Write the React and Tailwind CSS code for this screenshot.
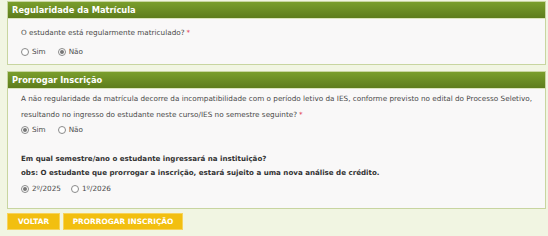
import React from "react";

const Radio = ({ checked, label }) => (
  <label className="flex items-center gap-[3px]">
    <span className="w-[8px] h-[8px] rounded-full border border-[#8a8a8a] bg-white flex items-center justify-center">
      {checked && <span className="w-[4px] h-[4px] rounded-full bg-[#777]" />}
    </span>
    <span>{label}</span>
  </label>
);

const Panel = ({ title, children }) => (
  <div className="border border-[#c8d5a0] bg-[#f9f8f8]">
    <div className="h-[17px] flex items-center pl-[4px] text-white font-bold text-[8.3px] bg-gradient-to-b from-[#7a9e2c] to-[#5e7d1c] border-b border-[#dbe5bd]">
      {title}
    </div>
    {children}
  </div>
);

export default function App() {
  return (
    <div
      className="w-[548px] h-[236px] bg-[#f1f5e2] pl-[7px] pr-[2px] pt-[1px] text-[#4a4a4a] text-[7.25px] whitespace-nowrap overflow-hidden"
      style={{ fontFamily: '"DejaVu Sans", Verdana, sans-serif' }}
    >
      <Panel title="Regularidade da Matrícula">
        <div className="pl-[13px] pt-[6px] pb-[3px]">
          <p className="h-[16px] flex items-center">
            O estudante está regularmente matriculado?<span className="text-[#e0203a] ml-[2px]">*</span>
          </p>
          <div className="flex gap-[12px] h-[18px] mt-[2px] items-center">
            <Radio label="Sim" />
            <Radio checked label="Não" />
          </div>
        </div>
      </Panel>

      <div className="h-[6px]" />

      <Panel title="Prorrogar Inscrição">
        <div className="pl-[13px] pt-[2px] pb-[11px]">
          <p className="h-[16px] flex items-center">
            A não regularidade da matrícula decorre da incompatibilidade com o período letivo da IES, conforme previsto no edital do Processo Seletivo,
          </p>
          <p className="h-[16px] flex items-center">
            resultando no ingresso do estudante neste curso/IES no semestre seguinte?<span className="text-[#e0203a] ml-[2px]">*</span>
          </p>
          <div className="flex gap-[12px] h-[14px] items-center">
            <Radio checked label="Sim" />
            <Radio label="Não" />
          </div>
          <p className="h-[14px] flex items-center font-bold text-[#333] text-[7.1px] mt-[15px]">
            Em qual semestre/ano o estudante ingressará na instituição?
          </p>
          <p className="h-[14px] flex items-center font-bold text-[#333] text-[7.1px]">
            obs: O estudante que prorrogar a inscrição, estará sujeito a uma nova análise de crédito.
          </p>
          <div className="flex gap-[10px] h-[16px] mt-[1px] items-center">
            <Radio checked label="2º/2025" />
            <Radio label="1º/2026" />
          </div>
        </div>
      </Panel>

      <div className="flex gap-[3px] mt-[4px]">
        <button className="h-[17px] w-[53px] bg-[#f2bf10] border border-[#f7d35a] text-white font-bold text-[7.4px]">
          VOLTAR
        </button>
        <button className="h-[17px] w-[120px] bg-[#f2bf10] border border-[#f7d35a] text-white font-bold text-[7.4px]">
          PRORROGAR INSCRIÇÃO
        </button>
      </div>
    </div>
  );
}
